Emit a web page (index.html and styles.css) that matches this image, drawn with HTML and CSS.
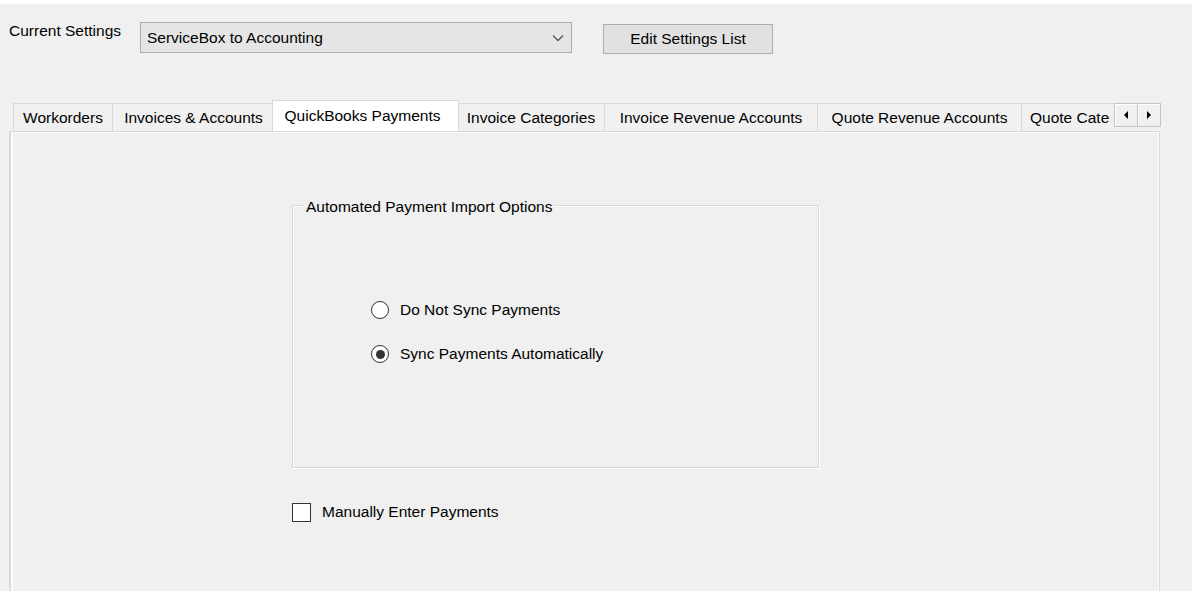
FILE: index.html
```html
<!DOCTYPE html>
<html>
<head>
<meta charset="utf-8">
<link rel="stylesheet" href="styles.css">
</head>
<body>
<div class="topstrip"></div>
<div class="header">
  <div class="cur-label">Current Settings</div>
  <div class="combo">
    <span class="combo-text">ServiceBox to Accounting</span>
    <svg class="chev" width="12" height="8" viewBox="0 0 12 8"><polyline points="1,1.5 6,6.5 11,1.5" fill="none" stroke="#555" stroke-width="1.3"/></svg>
  </div>
  <div class="btn">Edit Settings List</div>
</div>
<div class="tabrow">
  <div class="tabs">
    <div class="tab w1">Workorders</div>
    <div class="tab w2">Invoices &amp; Accounts</div>
    <div class="tab sel">QuickBooks Payments</div>
    <div class="tab w4">Invoice Categories</div>
    <div class="tab w5">Invoice Revenue Accounts</div>
    <div class="tab w6">Quote Revenue Accounts</div>
    <div class="tab w7">Quote Cate</div>
  </div>
  <div class="scroll">
    <div class="sbtn"><svg width="6" height="8" viewBox="0 0 6 8"><polygon points="5,0 5,8 1,4" fill="#000"/></svg></div>
    <div class="sbtn"><svg width="6" height="8" viewBox="0 0 6 8"><polygon points="1,0 1,8 5,4" fill="#000"/></svg></div>
  </div>
</div>
<div class="panel">
  <div class="group">
    <span class="legend">Automated Payment Import Options</span>
    <div class="options">
      <div class="opt"><span class="radio"></span><span>Do Not Sync Payments</span></div>
      <div class="opt"><span class="radio checked"></span><span>Sync Payments Automatically</span></div>
    </div>
  </div>
  <div class="check-row"><span class="checkbox"></span><span>Manually Enter Payments</span></div>
</div>
</body>
</html>
```
FILE: styles.css
```css
html, body {
  margin: 0;
  padding: 0;
  background: #f0f0f0;
  font-family: "Liberation Sans", Arial, sans-serif;
  font-size: 15.5px;
  color: #000;
  overflow: hidden;
  height: 591px;
}
.topstrip {
  height: 4px;
  background: #fff;
}
.header {
  display: flex;
  align-items: flex-start;
  padding: 18px 0 0 9px;
  height: 78px;
}
.cur-label {
  width: 131px;
  line-height: 18px;
  white-space: nowrap;
}
.combo {
  box-sizing: border-box;
  width: 432px;
  height: 31px;
  border: 1px solid #adadad;
  background: #e5e5e5;
  display: flex;
  align-items: center;
  justify-content: space-between;
  padding: 0 7px 0 6px;
}
.combo-text {
  line-height: 29px;
}
.chev {
  display: block;
}
.btn {
  box-sizing: border-box;
  margin: 2px 0 0 31px;
  width: 170px;
  height: 30px;
  border: 1px solid #adadad;
  background: #e1e1e1;
  display: flex;
  align-items: center;
  justify-content: center;
}
.tabrow {
  display: flex;
  height: 31px;
  padding-left: 13px;
}
.tabs {
  display: flex;
  align-items: flex-end;
  width: 1101px;
  overflow: hidden;
  height: 31px;
  flex: none;
}
.tab {
  box-sizing: border-box;
  flex: none;
  height: 28px;
  border-top: 1px solid #d9d9d9;
  border-left: 1px solid #d9d9d9;
  background: #f0f0f0;
  text-align: center;
  line-height: 18px;
  padding-top: 5px;
  white-space: nowrap;
}
.w1 { width: 99px; }
.w2 { width: 162px; }
.w4 { width: 147px; }
.w5 { width: 213px; }
.w6 { width: 204px; }
.w7 { width: 93px; text-align: left; padding-left: 8px; }
.tab.sel {
  position: relative;
  z-index: 1;
  width: 187px;
  margin: 0 -2px;
  height: 32px;
  margin-bottom: -1px;
  background: #fff;
  border: 1px solid #d9d9d9;
  border-bottom: none;
  padding-top: 6px;
  padding-right: 6px;
}
.scroll {
  display: flex;
  margin-top: 3px;
  height: 24px;
}
.sbtn {
  box-sizing: border-box;
  width: 24px;
  height: 24px;
  border: 1px solid #c4c4c4;
  background: #f0f0f0;
  box-shadow: inset 1px 1px 0 #fff;
  display: flex;
  align-items: center;
  justify-content: center;
}
.sbtn + .sbtn {
  margin-left: -1px;
}
.sbtn svg { display: block; }
.panel {
  box-sizing: border-box;
  margin-left: 9px;
  width: 1151px;
  height: 470px;
  border: 1px solid #d9d9d9;
  border-left-width: 2px;
  box-shadow: inset 2px 1px 0 #fcfcfc, inset -1px 0 0 #fcfcfc;
  padding-top: 73px;
  padding-left: 281px;
}
.group {
  position: relative;
  box-sizing: border-box;
  width: 527px;
  height: 263px;
  border: 1px solid #d8d8d8;
  box-shadow: 1px 1px 0 #fff, inset 1px 1px 0 #fff;
}
.legend {
  position: absolute;
  left: 11px;
  top: -8px;
  padding: 0 2px;
  line-height: 18px;
  background: #f0f0f0;
  white-space: nowrap;
}
.options {
  padding: 93px 0 0 78px;
  display: flex;
  flex-direction: column;
  gap: 22px;
}
.opt {
  display: flex;
  align-items: center;
  height: 22px;
  gap: 11px;
}
.radio {
  box-sizing: border-box;
  width: 18px;
  height: 18px;
  border-radius: 50%;
  border: 1px solid #333;
  background: #fff;
  display: flex;
  align-items: center;
  justify-content: center;
}
.radio.checked::after {
  content: "";
  width: 9px;
  height: 9px;
  border-radius: 50%;
  background: #333;
}
.check-row {
  margin-top: 33px;
  display: flex;
  align-items: center;
  height: 22px;
  gap: 11px;
}
.checkbox {
  box-sizing: border-box;
  width: 19px;
  height: 19px;
  border: 1px solid #333;
  background: #fff;
}
```
